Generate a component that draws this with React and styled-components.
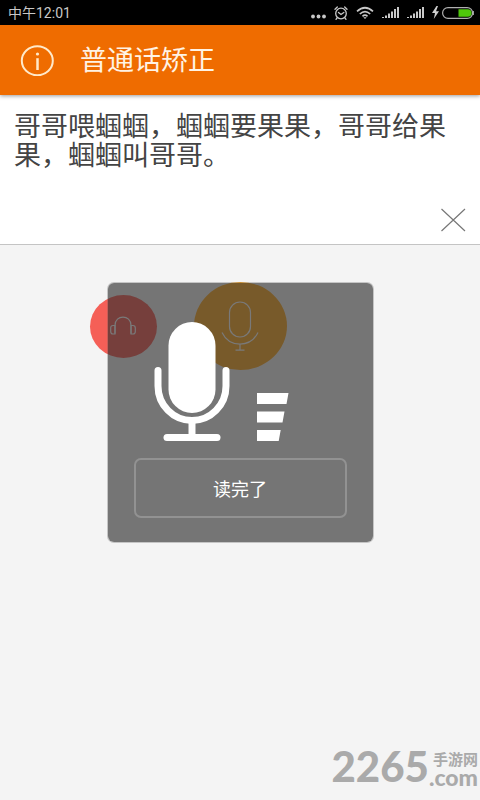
import React from "react";
import styled, { createGlobalStyle } from "styled-components";

const GlobalStyle = createGlobalStyle`
  * {
    box-sizing: border-box;
  }
  body {
    margin: 0;
    background: #f4f4f4;
    font-family: "Noto Sans CJK SC", "Noto Sans", sans-serif;
  }
  svg {
    display: block;
  }
`;

const Page = styled.div`
  position: relative;
  display: flex;
  flex-direction: column;
  min-height: 100vh;
  overflow: hidden;
`;

const StatusBar = styled.div`
  display: flex;
  align-items: center;
  justify-content: space-between;
  height: 25px;
  padding: 0 6px 0 8px;
  background: #000;
  color: #c8c8c8;
  font-family: Roboto, "Noto Sans CJK SC", sans-serif;
  font-size: 14px;
  line-height: 24px;
`;

const StatusIcons = styled.div`
  display: flex;
  align-items: center;
  gap: 8px;
`;

const Power = styled.div`
  display: flex;
  align-items: center;
  gap: 3px;
`;

const Header = styled.header`
  position: relative;
  display: flex;
  align-items: center;
  gap: 26px;
  height: 70px;
  padding: 0 20px 2px;
  background: #ef6c00;
  color: #fff3e4;
  box-shadow: 0 1px 4px rgba(0, 0, 0, 0.4);
`;

const PlainButton = styled.button`
  padding: 0;
  border: none;
  background: none;
  font-family: inherit;
  cursor: pointer;
`;

const Title = styled.h1`
  margin: 0;
  font-size: 27px;
  font-weight: 400;
  line-height: 32px;
`;

const TextPanel = styled.section`
  display: flex;
  flex-direction: column;
  justify-content: space-between;
  min-height: 150px;
  padding: 15px 14px 10px;
  border-bottom: 1px solid #c4c4c4;
  background: #fff;
`;

const Sentence = styled.p`
  margin: 0;
  color: #444;
  font-size: 27px;
  line-height: 29px;
`;

const ClearButton = styled(PlainButton)`
  align-self: flex-end;
`;

const Stage = styled.main`
  position: relative;
  flex: 1;
  padding-top: 37px;
`;

const Controls = styled.div`
  display: grid;
  grid-template-columns: 1fr auto 1fr;
  align-items: center;
  column-gap: 37px;
`;

const RoundButton = styled(PlainButton)`
  display: flex;
  align-items: center;
  justify-content: center;
  justify-self: end;
  width: ${(props) => props.$width}px;
  height: ${(props) => props.$height}px;
  border-radius: 50%;
  background: ${(props) => props.$color};
`;

// 录音弹窗盖在按钮上面
const Overlay = styled.div`
  position: absolute;
  inset: 37px 0 auto;
  display: flex;
  justify-content: center;
`;

const Dialog = styled.div`
  width: 267px;
  padding: 39px 26px 24px;
  border: 1px solid rgba(90, 90, 90, 0.3);
  border-radius: 7px;
  background: rgba(45, 45, 45, 0.64);
  background-clip: padding-box;
`;

const Recording = styled.div`
  display: flex;
  align-items: flex-end;
  gap: 27px;
  padding-left: 20px;
`;

const DoneButton = styled(PlainButton)`
  width: 100%;
  height: 60px;
  margin-top: 17px;
  border: 2px solid #929292;
  border-radius: 7px;
  color: #fff;
  font-size: 18px;
`;

const Watermark = styled.div`
  position: absolute;
  right: 2px;
  bottom: 13px;
  display: flex;
  align-items: flex-end;
  color: #aaa;
  font-family: Lato, "Noto Sans CJK SC", sans-serif;
  font-weight: 900;
`;

const WatermarkNumber = styled.span`
  font-size: 42px;
  line-height: 42px;
`;

const WatermarkSide = styled.div`
  display: flex;
  flex-direction: column;
  align-items: flex-end;
`;

const WatermarkName = styled.span`
  font-size: 15px;
  font-weight: 700;
  line-height: 16px;
`;

const WatermarkDomain = styled.span`
  font-size: 23px;
  line-height: 20px;
`;

function Signal() {
  return (
    <svg width="17" height="13" fill="#c8c8c8">
      <path d="M0 12v-1h2v1zM3 12V9.500h2V12zM6 12V7.500h2V12zM9 12V5.500h2V12zM12 12V3h2v9zM15 12V1h2v11z" />
    </svg>
  );
}

function App() {
  return (
    <Page>
      <GlobalStyle />
      <StatusBar>
        <span>中午12:01</span>
        <StatusIcons>
          <svg width="15" height="14" fill="#c8c8c8">
            <circle cx="2" cy="10.500" r="1.900" />
            <circle cx="7.500" cy="10.500" r="1.900" />
            <circle cx="13" cy="10.500" r="1.900" />
          </svg>
          <svg width="14" height="14" fill="none" stroke="#c8c8c8" strokeWidth="1.300" strokeLinecap="round">
            <circle cx="7" cy="7.500" r="5.300" />
            <path d="M4.500 6.500 7 8.500l2.800-2M1 3.200 3.300 1M13 3.200 10.700 1M3 12l-1 1.300M11 12l1 1.300" />
          </svg>
          <svg width="18" height="14" fill="none" stroke="#c8c8c8" strokeWidth="1.700">
            <path d="M1 5.300Q9-1.800 17 5.300M3.800 8Q9 3.200 14.200 8M6.500 10.400Q9 8 11.500 10.400" />
            <path d="M7.300 11.200h3.400L9 13z" fill="#c8c8c8" stroke="none" />
          </svg>
          <Signal />
          <Signal />
          <Power>
            <svg width="7" height="13" fill="#d0d0d0">
              <path d="M4.500 0 0 7h3L1.800 13 7 5.300H4L6 0z" />
            </svg>
            <svg width="32" height="12">
              <rect x="0.600" y="0.600" width="30" height="10.800" rx="5.400" fill="none" stroke="#b0b0b0" strokeWidth="1.200" />
              <path d="M16.500 2.200h9.300a3.800 3.800 0 0 1 0 7.600h-9.300z" fill="#4fc70b" />
              <path d="M31.400 4v4" stroke="#b0b0b0" />
            </svg>
          </Power>
        </StatusIcons>
      </StatusBar>

      <Header>
        <PlainButton aria-label="信息">
          <svg width="34" height="34" fill="none" stroke="#ffe9c9" strokeWidth="2">
            <ellipse cx="17.300" cy="18.800" rx="15.500" ry="14.500" />
            <path d="M17.500 16.200V28" strokeWidth="2.500" />
            <circle cx="17.500" cy="12" r="1.600" fill="#ffe9c9" stroke="none" />
          </svg>
        </PlainButton>
        <Title>普通话矫正</Title>
      </Header>

      <TextPanel>
        <Sentence>哥哥喂蝈蝈，蝈蝈要果果，哥哥给果果，蝈蝈叫哥哥。</Sentence>
        <ClearButton aria-label="清除">
          <svg width="26" height="28" stroke="#777" strokeWidth="1.200">
            <path d="M1.500 3 25 25M25 3 1.500 25" />
          </svg>
        </ClearButton>
      </TextPanel>

      <Stage>
        <Controls>
          <RoundButton $width={67} $height={63} $color="#f55f57" aria-label="试听">
            <svg width="26" height="20" fill="none" stroke="#fff" strokeWidth="1.200">
              <path d="M5 17.500V9.500C5-1.800 21-1.800 21 9.500v8" />
              <path d="M5 9.500H3Q.7 9.500.7 12v3.500q0 2.500 2.300 2.500h2zM21 9.500h2q2.300 0 2.300 2.500v3.500q0 2.500-2.300 2.500h-2z" />
            </svg>
          </RoundButton>
          <RoundButton $width={93} $height={88} $color="#fca824" aria-label="录音">
            <svg width="38" height="50" fill="none" stroke="#fff" strokeWidth="1.200">
              <rect x="8.500" y="1" width="21" height="35" rx="10.500" />
              <path d="M1 31.500C8.500 47 29.500 47 37 31.500M19 43v6M14.500 49.200h9" />
            </svg>
          </RoundButton>
        </Controls>

        <Overlay>
          <Dialog role="dialog" aria-label="录音中">
            <Recording>
              <svg width="76" height="119" fill="none" stroke="#fff">
                <rect x="14.500" y="0" width="47" height="91" rx="23.500" fill="#fff" stroke="none" />
                <path d="M4 48.500V64a34 34.500 0 0 0 68 0V48.500" strokeWidth="7" strokeLinecap="round" />
                <path d="M38 99v15" strokeWidth="7" />
                <path d="M13 115.500h50" strokeWidth="7" strokeLinecap="round" />
              </svg>
              <svg width="32" height="49" fill="#fff">
                <path d="M0 1h31.500l-2 11H0zM0 19.500h27.500l-2 11H0zM0 38h23.700l-2 11H0z" />
              </svg>
            </Recording>
            <DoneButton>读完了</DoneButton>
          </Dialog>
        </Overlay>
      </Stage>

      <Watermark>
        <WatermarkNumber>2265</WatermarkNumber>
        <WatermarkSide>
          <WatermarkName>手游网</WatermarkName>
          <WatermarkDomain>.com</WatermarkDomain>
        </WatermarkSide>
      </Watermark>
    </Page>
  );
}

export default App;
